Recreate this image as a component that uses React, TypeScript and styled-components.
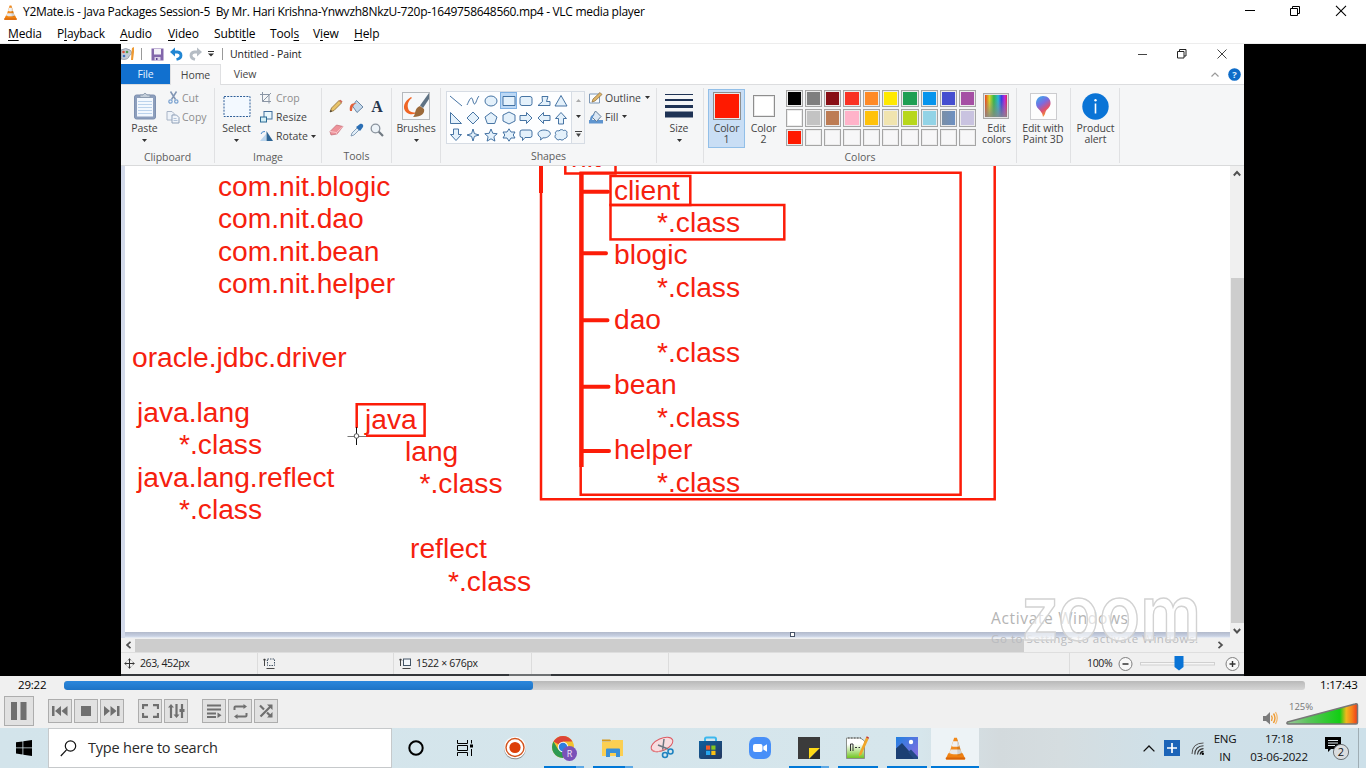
import React from "react";
import styled, { createGlobalStyle } from "styled-components";

const UI = `"Open Sans", "Noto Sans", sans-serif`;
const RED = "#fc1c08";

const Global = createGlobalStyle`
  *, *::before, *::after { box-sizing: border-box; }
  html, body { margin: 0; padding: 0; }
  body { width: 1366px; height: 768px; overflow: hidden; background: #fff; font-family: ${UI}; }
  svg { display: block; flex: none; }
`;

const Screen = styled.div`
  width: 1366px;
  height: 768px;
  display: flex;
  flex-direction: column;
  overflow: hidden;
`;

/* ---------- shared ---------- */
const Label = styled.span<{ $size?: number; $ls?: number; $color?: string; $ml?: number; $w?: number }>`
  font-size: ${(p) => p.$size ?? 12}px;
  letter-spacing: ${(p) => p.$ls ?? 0}px;
  color: ${(p) => p.$color ?? "#000"};
  margin-left: ${(p) => p.$ml ?? 0}px;
  ${(p) => (p.$w ? `width: ${p.$w}px;` : "")}
  white-space: pre;
  line-height: 1;
  flex: none;
`;

const Spacer = styled.div`
  flex: 1;
`;

type GlyphProps = { w: number; h: number; vb?: string; ml?: number; children: React.ReactNode };
const GlyphSvg = styled.svg<{ $ml: number }>`
  margin-left: ${(p) => p.$ml}px;
`;
const Glyph = ({ w, h, vb, ml = 0, children }: GlyphProps) => (
  <GlyphSvg $ml={ml} width={w} height={h} viewBox={vb ?? `0 0 ${w} ${h}`} fill="none">
    {children}
  </GlyphSvg>
);

const Cone = ({ size, ml = 0 }: { size: number; ml?: number }) => (
  <Glyph w={size} h={size} vb="0 0 24 24" ml={ml}>
    <path d="M4.5 17h15l2.5 5.4c.2.6-.1 1.1-.8 1.1H2.800c-.7 0-1-.5-.8-1.100z" fill="#f08010" />
    <path d="M2 21.500h20l.2 1.200c0 .5-.4.8-1 .8H2.800c-.6 0-1-.3-1-.8z" fill="#d86408" />
    <path d="M10.600.8h2.800L18.800 18c-1.500 2-12.100 2-13.600 0z" fill="#f28a1c" />
    <path d="M9.500 4.500h5l1.500 4.800c-1.500 1.200-6.500 1.200-8 0z" fill="#f1f1f1" />
    <path d="M6.800 13h10.400l1.100 3.600c-2 1.800-10.600 1.800-12.600 0z" fill="#e9e9e9" />
    <path d="M13.400.8 18.800 18c-.8 1-3 1.400-4.800 1.500z" fill="#000" opacity=".1" />
  </Glyph>
);

const WindowButtons = ({ dark }: { dark: string }) => (
  <>
    <path d="M0 5.500h10" stroke={dark} />
    <path d="M45.500 3.500h7v7h-7zM47.500 3.500v-2h7v7h-2" stroke={dark} />
    <path d="M91 .8l10 10M101 .8l-10 10" stroke={dark} strokeWidth="1.100" />
  </>
);

/* ---------- VLC chrome ---------- */
const TitleBar = styled.header`
  height: 24px;
  flex: none;
  display: flex;
  align-items: center;
  background: #fff;
  padding-left: 3px;
`;

const MenuBar = styled.nav`
  height: 20px;
  flex: none;
  background: #fff;
  display: flex;
  align-items: center;
  padding-left: 8px;
  border-bottom: 1px solid #ededed;
`;

const MenuItem = styled.span<{ $w: number }>`
  width: ${(p) => p.$w}px;
  font-size: 12px;
  letter-spacing: -0.15px;
  line-height: 18px;
  white-space: nowrap;
  u { text-underline-offset: 2px; text-decoration-thickness: 1px; }
`;

const Video = styled.main`
  height: 632px;
  flex: none;
  background: #000;
  display: flex;
  justify-content: flex-start;
  padding: 0 0 0 121px;
`;

/* ---------- Paint window ---------- */
const PaintWindow = styled.section`
  position: relative;
  width: 1123px;
  height: 632px;
  display: flex;
  flex-direction: column;
  background: #fff;
`;

const PaintTitle = styled.div`
  height: 20px;
  display: flex;
  align-items: center;
  padding-right: 17px;
`;

const Tabs = styled.div`
  height: 21px;
  display: flex;
  border-bottom: 1px solid #dcdddf;
  align-items: flex-start;
`;

const Tab = styled.div<{ $w: number; $kind?: "file" | "active" }>`
  width: ${(p) => p.$w}px;
  height: ${(p) => (p.$kind === "active" ? 21 : 20)}px;
  display: flex;
  align-items: center;
  justify-content: center;
  font-size: 10.500px;
  letter-spacing: -0.1px;
  color: ${(p) => (p.$kind === "file" ? "#e6f2ff" : "#454545")};
  background: ${(p) => (p.$kind === "file" ? "#1170cf" : p.$kind === "active" ? "#f6f6f7" : "transparent")};
  border: ${(p) => (p.$kind === "active" ? "1px solid #dfe0e2" : "0")};
  border-bottom: 0;
`;

const TabTools = styled.div`
  margin-left: auto;
  height: 20px;
  display: flex;
  align-items: center;
  padding-right: 3px;
`;

const Ribbon = styled.div`
  height: 81px;
  background: #f5f6f7;
  border-bottom: 1px solid #d9dadb;
  display: flex;
  padding-top: 3px;
`;

const Group = styled.div<{ $w: number }>`
  width: ${(p) => p.$w}px;
  height: 75px;
  border-right: 1px solid #e0e1e3;
  display: flex;
  flex-direction: column;
`;

const GroupBody = styled.div<{ $pl?: number }>`
  height: 60px;
  display: flex;
  padding-left: ${(p) => p.$pl ?? 0}px;
`;

const GroupName = styled.div<{ $shift?: number }>`
  text-align: center;
  font-size: 10.500px;
  line-height: 14px;
  letter-spacing: -0.05px;
  color: #5c5c5c;
  margin-top: 2px;
  padding-left: ${(p) => p.$shift ?? 0}px;
`;

const BigButton = styled.div<{ $w: number; $on?: boolean }>`
  width: ${(p) => p.$w}px;
  height: 59px;
  margin-top: 1px;
  flex: none;
  display: flex;
  flex-direction: column;
  align-items: center;
  font-size: 10.500px;
  line-height: 11px;
  letter-spacing: -0.1px;
  color: #444;
  text-align: center;
  white-space: pre;
  background: ${(p) => (p.$on ? "#c9def5" : "transparent")};
  box-shadow: ${(p) => (p.$on ? "inset 0 0 0 1px #92bfe8" : "none")};
`;

const BigArt = styled.div`
  height: 34px;
  display: flex;
  align-items: center;
  justify-content: center;
`;

const SmallColumn = styled.div<{ $ml?: number }>`
  display: flex;
  flex-direction: column;
  margin-left: ${(p) => p.$ml ?? 0}px;
`;

const SmallRow = styled.div<{ $dim?: boolean }>`
  height: 19.300px;
  display: flex;
  align-items: center;
  font-size: 10.500px;
  letter-spacing: 0;
  color: ${(p) => (p.$dim ? "#8d8d8d" : "#444")};
  white-space: nowrap;
`;

const SmallArt = styled.div`
  width: 16px;
  display: flex;
  justify-content: flex-start;
`;

const ToolGrid = styled.div`
  display: grid;
  grid-template-columns: repeat(3, 20.500px);
  grid-template-rows: 24px 24px;
  margin-top: 6px;
  place-items: center;
`;

const ShapeBox = styled.div`
  display: grid;
  grid-template-columns: repeat(7, 17.600px);
  grid-template-rows: repeat(3, 17.300px);
  place-items: center;
  width: 126px;
  height: 53px;
  margin-top: 3px;
  background: #fdfeff;
  border: 1px solid #d6dce4;
`;

const ShapeCell = styled.div<{ $on?: boolean }>`
  width: 17px;
  height: 17px;
  display: flex;
  align-items: center;
  justify-content: center;
  background: ${(p) => (p.$on ? "#bcd8f5" : "transparent")};
  box-shadow: ${(p) => (p.$on ? "inset 0 0 0 1px #7fb0e2" : "none")};
`;

const ShapeScroll = styled.div`
  width: 13px;
  height: 53px;
  margin-top: 3px;
  border: 1px solid #d6dce4;
  border-left: 0;
  display: flex;
  flex-direction: column;
  justify-content: space-around;
  align-items: center;
`;

const Swatch = styled.div<{ $size: number; $color: string }>`
  width: ${(p) => p.$size}px;
  height: ${(p) => p.$size}px;
  background: ${(p) => p.$color};
  border: 1px solid #8e8e8e;
  box-shadow: inset 0 0 0 1px #e8e8e8;
`;

const Palette = styled.div`
  display: grid;
  grid-template-columns: repeat(10, 17.300px);
  grid-template-rows: repeat(3, 17.300px);
  gap: 2px;
  margin: 2px 0 0 3.500px;
`;

const Chip = styled.div<{ $color: string }>`
  background: ${(p) => p.$color};
  border: 1px solid #a5a5a5;
  box-shadow: inset 0 0 0 1px #ececec;
`;

const Workspace = styled.div`
  height: 472px;
  display: flex;
  background: #cfd7e8;
`;

const CanvasArea = styled.div`
  width: 1109px;
  display: flex;
  flex-direction: column;
  padding-left: 4px;
  background: #d3daea;
`;

const Canvas = styled.div`
  position: relative;
  height: 466px;
  background: #fff;
  overflow: hidden;
`;

const CanvasEdge = styled.div`
  height: 6px;
  background: linear-gradient(#b2bacb, #c8d1e3 70%, #eef2f8);
  display: flex;
  padding-left: 665px;
`;

const Handle = styled.div`
  width: 5px;
  height: 5px;
  background: #fff;
  border: 1px solid #4a5568;
`;

const Note = styled.div<{ $x: number; $y: number }>`
  position: absolute;
  left: ${(p) => p.$x - 125}px;
  top: ${(p) => p.$y - 166}px;
  font-family: "Liberation Sans", Arial, sans-serif;
  font-size: 28.200px;
  line-height: 32.450px;
  color: #f6200e;
  white-space: pre;
`;

const NoteLine = styled.div<{ $in?: number }>`
  padding-left: ${(p) => p.$in ?? 0}px;
`;

const VScroll = styled.div`
  width: 14px;
  background: #f0f0f0;
  display: flex;
  flex-direction: column;
  align-items: center;
`;

const VThumb = styled.div`
  width: 13px;
  height: 345px;
  margin-top: 98px;
  background: #cdcdcd;
`;

const HScroll = styled.div`
  height: 15px;
  background: #f0f0f0;
  display: flex;
  align-items: center;
  border-bottom: 1px solid #dedede;
`;

const HThumb = styled.div`
  width: 889px;
  height: 13px;
  margin-left: 4px;
  background: #cdcdcd;
`;

const StatusBar = styled.div`
  height: 21px;
  background: #f0f0f0;
  display: flex;
`;

const StatusCell = styled.div<{ $w?: number; $pl?: number; $line?: boolean }>`
  ${(p) => (p.$w ? `width: ${p.$w}px;` : "flex: 1;")}
  height: 21px;
  padding-left: ${(p) => p.$pl ?? 0}px;
  border-right: ${(p) => (p.$line ? "1px solid #dcdcdc" : "0")};
  display: flex;
  align-items: center;
`;

const BottomEdge = styled.div`
  height: 2px;
  background: linear-gradient(90deg, #33363a 388px, #6d7072 388px 430px, #33363a 430px);
`;

const Watermark = styled.svg`
  position: absolute;
  left: 864px;
  top: 546px;
`;

/* ---------- player controls ---------- */
const SeekRow = styled.div`
  height: 18px;
  flex: none;
  background: #f0f0f0;
  display: flex;
  align-items: center;
  padding-left: 18px;
`;

const SeekTrack = styled.div`
  width: 1241px;
  height: 9px;
  border-radius: 3px;
  background: linear-gradient(#b9b9b9, #d6d6d6);
  overflow: hidden;
`;

const SeekFill = styled.div`
  width: 469px;
  height: 9px;
  border-radius: 3px;
  background: linear-gradient(#2b87dc, #1e74c6);
`;

const ControlRow = styled.div`
  height: 34px;
  flex: none;
  background: #f0f0f0;
  display: flex;
  align-items: center;
  padding-left: 4px;
`;

const PlayerButton = styled.div<{ $size?: number; $ml?: number }>`
  width: ${(p) => p.$size ?? 24}px;
  height: ${(p) => p.$size ?? 24}px;
  margin-left: ${(p) => p.$ml ?? 0}px;
  border: 1px solid #adadad;
  background: #e1e1e1;
  display: flex;
  align-items: center;
  justify-content: center;
`;

const Volume = styled.div`
  margin-left: auto;
  height: 34px;
  display: flex;
  align-items: flex-start;
  padding: 8px 6px 0 0;
`;

const VolumeMeter = styled.div`
  position: relative;
  width: 75px;
  height: 24px;
  margin-left: 7px;
`;

const VolumeText = styled.span`
  position: absolute;
  left: 4px;
  top: 0;
  font-size: 9.500px;
  line-height: 10px;
  color: #777;
`;

/* ---------- taskbar ---------- */
const Taskbar = styled.footer`
  height: 40px;
  flex: none;
  display: flex;
  background: linear-gradient(90deg, #d3e4eb 0, #d6e6ec 920px, #d3dadd 1000px, #d5dde0 1060px, #cfe0e8 1160px, #cde0e9 100%);
`;

const StartButton = styled.div`
  width: 48px;
  display: flex;
  align-items: center;
  justify-content: center;
`;

const SearchBox = styled.div`
  width: 344px;
  height: 40px;
  background: #fff;
  border: 1px solid #c6c9cb;
  display: flex;
  align-items: center;
  padding-left: 11px;
`;

const TaskItem = styled.div<{ $w?: number; $bar?: "full" | "split"; $on?: boolean }>`
  width: ${(p) => p.$w ?? 49}px;
  height: 40px;
  flex: none;
  display: flex;
  flex-direction: column;
  align-items: center;
  justify-content: center;
  background: ${(p) => (p.$on ? "#edf3f6" : "transparent")};
  position: relative;
  &::after {
    content: "";
    position: absolute;
    bottom: 0;
    height: 2px;
    width: ${(p) => (p.$on ? 48 : 40)}px;
    background: ${(p) =>
      p.$bar === "split" ? "linear-gradient(90deg, #0078d7 32px, #5ba8e5 32px)" : p.$bar ? "#0078d7" : "transparent"};
  }
`;

const Tray = styled.div`
  margin-left: auto;
  display: flex;
  align-items: center;
`;

const TrayText = styled.div<{ $w: number }>`
  width: ${(p) => p.$w}px;
  text-align: center;
  font-size: 11.500px;
  line-height: 18px;
  letter-spacing: -0.25px;
  color: #111;
  white-space: nowrap;
`;

const ShowDesktop = styled.div`
  width: 8px;
  height: 40px;
  border-left: 1px solid #9fadb4;
`;

/* ---------- data ---------- */
const menus: [string, string, string, number][] = [
  ["", "M", "edia", 49],
  ["P", "l", "ayback", 63],
  ["", "A", "udio", 48],
  ["", "V", "ideo", 46],
  ["Subti", "t", "le", 56],
  ["Tool", "s", "", 43],
  ["V", "i", "ew", 41],
  ["", "H", "elp", 40],
];

const chips = [
  "#000", "#7f7f7f", "#880f15", "#fa3223", "#ff8a26", "#ffe900", "#1f9f53", "#0795ed", "#444ed0", "#a54fa4",
  "#fff", "#c3c3c3", "#bd7c54", "#ffb3c9", "#ffc20b", "#f0e4af", "#b7d71c", "#92d3e6", "linear-gradient(90deg,#7c8fa4,#6b90c4)", "#c9c3e0",
  "#ff1a00", ...Array(9).fill("#f7f7f8"),
];

const shapes = [
  "M1 2l12 10", "M1 11C3 7 4 4 5.500 4S7 10 8.500 10 11 4 13 2", "M1 7a6 5 0 1 0 12 0a6 5 0 1 0-12 0", "M1 2.500h12v9H1z",
  "M3 2.500h8a2 2 0 0 1 2 2v5a2 2 0 0 1-2 2H3a2 2 0 0 1-2-2v-5a2 2 0 0 1 2-2z", "M5 2.500h6l-1.500 5H13v4H1L5.500 7.500z", "M7 1.500l6 10.500H1z",
  "M1.500 1.500v11h11z", "M7 1l6 6-6 6-6-6z", "M7 1.500l6 4.500-2.300 6.500H3.300L1 6z", "M7 1l6 3v6l-6 3-6-3V4z", "M1 4.500h6.500V1.500L13 7l-5.500 5.500v-3H1z",
  "M13 4.500H6.500V1.500L1 7l5.500 5.500v-3H13z", "M4.500 13V7.500H1.500L7 1.500l5.500 6h-3V13z",
  "M4.500 1v5.500H1.500L7 12.500l5.500-6h-3V1z", "M7 1l1.400 4.600L13 7 8.400 8.400 7 13 5.600 8.400 1 7l4.600-1.400z", "M7 1l1.800 4.300 4.400.4-3.300 3 1 4.400L7 10.800 3.100 13.100l1-4.400-3.300-3 4.400-.4z",
  "M7 .8l2 3.200h4L11.200 7 13 10H9l-2 3.200L5 10H1l1.800-3L1 4h4z", "M3 2h8q2 0 2 2v3.500q0 2-2 2H6L3.500 12.500V9.500H3q-2 0-2-2V4q0-2 2-2z",
  "M4 9.800C-2 6 2 2 7 2s9.500 3.500 3.500 7c-1.500.8-3 1-4.500.8L3.500 12z", "M3 11c-3-1-2-4-1-4.500C0 4 3 2 5 3c1-2 4-1.500 4.500-.5C12 1.500 14 4 12.500 6c1.500 2 0 4.500-2 4.500-1 2-4 2-4.500.5C5 12.500 3 12 3 11z",
];

const Caret = ({ ml = 0, color = "#333" }: { ml?: number; color?: string }) => (
  <Glyph w={5} h={3} ml={ml}>
    <path d="M0 0h5L2.500 3z" fill={color} />
  </Glyph>
);

const CaretSlot = styled.div`
  height: 8px;
  display: flex;
  align-items: flex-end;
`;

const Big = ({ w, text, art, caret, on }: { w: number; text: string; art: React.ReactNode; caret?: boolean; on?: boolean }) => (
  <BigButton $w={w} $on={on}>
    <BigArt>{art}</BigArt>
    {text}
    {caret && (
      <CaretSlot>
        <Caret />
      </CaretSlot>
    )}
  </BigButton>
);

const PaintRibbon = () => (
  <Ribbon>
    <Group $w={94}>
      <GroupBody $pl={3}>
        <Big
          w={41}
          text="Paste"
          caret
          art={
            <Glyph w={24} h={28}>
              <rect x="1.500" y="3" width="21" height="24" rx="2" fill="#8d9fbd" stroke="#7e90b0" />
              <rect x="4" y="6" width="16" height="18.500" fill="#f3f8fe" />
              <path d="M5 9.500h14M5 12.500h14M5 15.500h14M5 18.500h14M5 21.500h14" stroke="#bcd3ec" />
              <path d="M7 5.500V3h3q2-3.500 4 0h3v2.500z" fill="#c4ced9" stroke="#8795a8" strokeWidth=".8" />
            </Glyph>
          }
        />
        <SmallColumn $ml={1}>
          <SmallRow $dim>
            <SmallArt>
              <Glyph w={12} h={13} ml={2}>
                <path d="M2.500.5l5 8M8.500.5l-5 8" stroke="#8296b4" strokeWidth="1.500" />
                <circle cx="2.500" cy="10.500" r="1.700" stroke="#7aa2d0" strokeWidth="1.200" />
                <circle cx="8.300" cy="10.500" r="1.700" stroke="#7aa2d0" strokeWidth="1.200" />
              </Glyph>
            </SmallArt>
            Cut
          </SmallRow>
          <SmallRow $dim>
            <SmallArt>
              <Glyph w={14} h={14}>
                <path d="M1 1.500h5l2 2v6.500H1z" fill="#eef3f9" stroke="#a8b4c6" />
                <path d="M6 5h4.500L13 7.500V13H6z" fill="#f1f5fa" stroke="#8fa0b8" />
                <path d="M7.500 8.500h3M7.500 10.500h4" stroke="#b3c3d8" />
              </Glyph>
            </SmallArt>
            Copy
          </SmallRow>
        </SmallColumn>
      </GroupBody>
      <GroupName>Clipboard</GroupName>
    </Group>

    <Group $w={107}>
      <GroupBody $pl={0}>
        <Big
          w={43}
          text="Select"
          caret
          art={
            <Glyph w={28} h={23}>
              <rect x="1" y="1.500" width="26" height="20" fill="#f3f9ff" stroke="#2f5f99" strokeDasharray="2 1.200" />
            </Glyph>
          }
        />
        <SmallColumn $ml={2}>
          <SmallRow $dim>
            <SmallArt>
              <Glyph w={12} h={12}>
                <path d="M2.500 0v9.500H11M0 2.500h9v9M2.500 9.500L11 1" stroke="#8b96a5" />
              </Glyph>
            </SmallArt>
            Crop
          </SmallRow>
          <SmallRow>
            <SmallArt>
              <Glyph w={13} h={12}>
                <rect x="4" y=".5" width="8" height="7.500" fill="#e9f6fb" stroke="#43709e" />
                <rect x=".5" y="6" width="6" height="5" fill="#d4eff5" stroke="#2c6b95" />
              </Glyph>
            </SmallArt>
            Resize
          </SmallRow>
          <SmallRow>
            <SmallArt>
              <Glyph w={13} h={12}>
                <path d="M0 11h6V4z" fill="#b9d5ee" />
                <path d="M6.500 1L13 11H6.500z" fill="#2e6594" />
                <path d="M1 4q1-3 4-2.500" stroke="#4a8ccc" />
              </Glyph>
            </SmallArt>
            Rotate
            <Caret ml={3} />
          </SmallRow>
        </SmallColumn>
      </GroupBody>
      <GroupName>Image</GroupName>
    </Group>

    <Group $w={70}>
      <GroupBody $pl={4}>
        <ToolGrid>
          <Glyph w={14} h={14}>
            <path d="M1 13l1.500-4L10 1.500 12.500 4 5 11.500z" fill="#e8c36a" stroke="#8a6a35" strokeWidth=".8" />
            <path d="M10 1.500L12.500 4 13.500 2.500 11.500.8z" fill="#cf6a5a" />
            <path d="M1 13l.8-2.200 1.400 1.400z" fill="#333" />
          </Glyph>
          <Glyph w={15} h={14}>
            <path d="M7.500 1.500L14 8l-6 5.500L3.500 7z" fill="#c5d9eb" stroke="#6a86a5" />
            <path d="M1 12C0 7 2 3 8 4.500 4 5 3.500 8 3 12z" fill="#e2603a" />
          </Glyph>
          <Glyph w={14} h={14}>
            <text x="7" y="12.500" textAnchor="middle" fontFamily="Liberation Serif, serif" fontWeight="700" fontSize="16" fill="#27364e">
              A
            </text>
          </Glyph>
          <Glyph w={15} h={12}>
            <path d="M1 7.500L7.500 1l6.500 1.500L8 10l-6 1z" fill="#ee929a" stroke="#c06a74" strokeWidth=".7" />
            <path d="M1 7.500l6.500 1L14 2.500M7.500 8.500L8 10.500" stroke="#f9c8cc" />
          </Glyph>
          <Glyph w={14} h={14}>
            <path d="M1 13l1-3 5-5 2 2-5 5z" fill="#e2eef8" stroke="#6e8ba9" strokeWidth=".8" />
            <path d="M6 4l4 4 1.200-1.500L13 4c1-2-1-4-3-3L7.500 3z" fill="#2b6fb5" />
          </Glyph>
          <Glyph w={14} h={14}>
            <circle cx="5.500" cy="5.500" r="4.300" fill="#edf3f8" stroke="#8a939d" strokeWidth="1.300" />
            <path d="M8.800 8.800L13 13" stroke="#707982" strokeWidth="2.200" />
          </Glyph>
        </ToolGrid>
      </GroupBody>
      <GroupName>Tools</GroupName>
    </Group>

    <Group $w={49}>
      <GroupBody>
        <Big
          w={48}
          text="Brushes"
          caret
          art={
            <Glyph w={28} h={28}>
              <rect x=".5" y=".5" width="27" height="27" fill="#f6f8fa" stroke="#b5b9bd" />
              <path d="M9 5C2 9 0 16 4 20c4 4 10 2 13 0-4 1-10 1-11-4-1-4 1-8 4-10z" fill="#ef6626" />
              <path d="M27 1v6L21 16l-3-2.500z" fill="#5e7284" />
              <path d="M18 14l4 3c1 4-2 8-11 8 3-2 1-9 7-11z" fill="#9b6a3b" />
            </Glyph>
          }
        />
      </GroupBody>
    </Group>

    <Group $w={216}>
      <GroupBody $pl={5}>
        <ShapeBox>
          {shapes.map((d, i) => (
            <ShapeCell key={i} $on={i === 3}>
              <Glyph w={14} h={14}>
                <path d={d} stroke="#33659a" strokeWidth=".9" fill={i < 2 ? "none" : "#e4f1fb"} />
              </Glyph>
            </ShapeCell>
          ))}
        </ShapeBox>
        <ShapeScroll>
          <Glyph w={5} h={3}>
            <path d="M0 3h5L2.500 0z" fill="#aaa" />
          </Glyph>
          <Caret />
          <Glyph w={7} h={6}>
            <path d="M0 .5h7" stroke="#444" />
            <path d="M1 2.500h5L3.500 6z" fill="#444" />
          </Glyph>
        </ShapeScroll>
        <SmallColumn $ml={4}>
          <SmallRow>
            <SmallArt>
              <Glyph w={14} h={12}>
                <path d="M.5 2h10v9H.5z" fill="#fafcff" stroke="#7d97b5" />
                <path d="M3 10l1-3L11 .5 13 2.500 6 9z" fill="#dfb56a" stroke="#8a6a35" strokeWidth=".7" />
              </Glyph>
            </SmallArt>
            Outline
            <Caret ml={4} />
          </SmallRow>
          <SmallRow>
            <SmallArt>
              <Glyph w={15} h={14}>
                <path d="M0 10h14v3.500H0z" fill="#5f95cf" />
                <path d="M6.500 1L12 6.500l-4.500 5L3 7z" fill="#dbe7f3" stroke="#5f7c9b" />
                <path d="M1 11C1 7 2 4.500 6 4.500 3.500 6 3.500 8 3 11z" fill="#5f95cf" />
              </Glyph>
            </SmallArt>
            Fill
            <Caret ml={4} />
          </SmallRow>
        </SmallColumn>
      </GroupBody>
      <GroupName $shift={0}>Shapes</GroupName>
    </Group>

    <Group $w={47}>
      <GroupBody>
        <Big
          w={44}
          text="Size"
          caret
          art={
            <Glyph w={28} h={28}>
              <path d="M0 2.500h28" stroke="#1f3355" />
              <path d="M0 8h28" stroke="#1f3355" strokeWidth="2" />
              <path d="M0 14.500h28" stroke="#1f3355" strokeWidth="3" />
              <path d="M0 22.500h28" stroke="#1f3355" strokeWidth="6" />
            </Glyph>
          }
        />
      </GroupBody>
    </Group>

    <Group $w={313}>
      <GroupBody $pl={4}>
        <Big w={37} on text={"Color\n1"} art={<Swatch $size={28} $color="#ff1a00" />} />
        <Big w={37} text={"Color\n2"} art={<Swatch $size={22} $color="#fff" />} />
        <Palette>
          {chips.map((c, i) => (
            <Chip key={i} $color={c} />
          ))}
        </Palette>
        <Big
          w={40}
          text={"Edit\ncolors"}
          art={
            <Glyph w={26} h={26}>
              <defs>
                <linearGradient id="hue">
                  <stop offset="0" stopColor="#e8421e" />
                  <stop offset=".2" stopColor="#d7d52a" />
                  <stop offset=".4" stopColor="#35b64a" />
                  <stop offset=".6" stopColor="#29b4d8" />
                  <stop offset=".75" stopColor="#3a3fe0" />
                  <stop offset=".9" stopColor="#c028d8" />
                  <stop offset="1" stopColor="#e0254f" />
                </linearGradient>
                <linearGradient id="grey" x2="0" y2="1">
                  <stop offset=".2" stopColor="#888" stopOpacity="0" />
                  <stop offset="1" stopColor="#888" stopOpacity=".85" />
                </linearGradient>
              </defs>
              <rect x=".5" y=".5" width="25" height="25" fill="#e4e4e4" stroke="#a9a9a9" />
              <rect x="2" y="2" width="22" height="22" fill="url(#hue)" />
              <rect x="2" y="2" width="22" height="22" fill="url(#grey)" />
            </Glyph>
          }
        />
      </GroupBody>
      <GroupName>Colors</GroupName>
    </Group>

    <Group $w={54}>
      <Big
        w={52}
        text={"Edit with\nPaint 3D"}
        art={
          <Glyph w={27} h={27}>
            <defs>
              <linearGradient id="drop" x1="0" y1="0" x2=".5" y2="1">
                <stop offset="0" stopColor="#30b5ee" />
                <stop offset=".45" stopColor="#7a6be0" />
                <stop offset=".75" stopColor="#e0506e" />
                <stop offset="1" stopColor="#f39a2e" />
              </linearGradient>
            </defs>
            <rect x=".5" y=".5" width="26" height="26" fill="#fdfdfd" stroke="#cccccf" />
            <path d="M13 3c5 0 8 3.500 7.500 8-.5 4-4 5-5 8-.5 2-1 3.500-2.500 5-.5-3-1-4-3-6.500C8 15.500 6 14 6 10.500 6 6 9 3 13 3z" fill="url(#drop)" />
          </Glyph>
        }
      />
    </Group>

    <Group $w={49}>
      <Big
        w={49}
        text={"Product\nalert"}
        art={
          <Glyph w={27} h={27}>
            <circle cx="13.500" cy="13.500" r="13.200" fill="#0a74d6" />
            <path d="M13.500 10.500v10" stroke="#fff" strokeWidth="1.600" />
            <circle cx="13.500" cy="7.200" r="1.200" fill="#fff" />
          </Glyph>
        }
      />
    </Group>
  </Ribbon>
);

const Drawing = () => (
  <Canvas>
    <svg width="1105" height="466" viewBox="125 166 1105 466" fill="none" stroke={RED} strokeWidth="2.500">
      <path d="M541 160V499.200H994.700V160" />
      <path d="M541 160V193" strokeWidth="4" />
      <path d="M565.300 160V173.500H615.500V160" />
      <path d="M580.700 172.700H960.600V494.700H580.700z" />
      <path d="M581.500 172V467" strokeWidth="4.300" />
      <rect x="610.500" y="176" width="79.800" height="29" />
      <rect x="610.500" y="205" width="173.800" height="34.400" />
      <g strokeWidth="4" strokeLinecap="round">
        <path d="M583 191.800H608M583 253.300H606M583 320.200H607.500M583 386.800H608.500M583 450.900H609" />
      </g>
      <path d="M356.700 428V404.200H424.600V435.800H366" />
      <path d="M347.500 436.500H366" stroke="#777" strokeWidth="1" />
      <path d="M356.500 427V445" stroke="#111" strokeWidth="1" />
      <circle cx="356.500" cy="436" r="2.300" fill="#fff" stroke="#555" strokeWidth="1" />
    </svg>
    <Note $x={218} $y={170}>
      <NoteLine>com.nit.blogic</NoteLine>
      <NoteLine>com.nit.dao</NoteLine>
      <NoteLine>com.nit.bean</NoteLine>
      <NoteLine>com.nit.helper</NoteLine>
    </Note>
    <Note $x={132} $y={341}>oracle.jdbc.driver</Note>
    <Note $x={137} $y={396}>
      <NoteLine>java.lang</NoteLine>
      <NoteLine $in={42}>*.class</NoteLine>
      <NoteLine>java.lang.reflect</NoteLine>
      <NoteLine $in={42}>*.class</NoteLine>
    </Note>
    <Note $x={365} $y={402.500}>
      <NoteLine>java</NoteLine>
      <NoteLine $in={40}>lang</NoteLine>
      <NoteLine $in={54.500}>*.class</NoteLine>
      <NoteLine> </NoteLine>
      <NoteLine $in={45}>reflect</NoteLine>
      <NoteLine $in={83}>*.class</NoteLine>
    </Note>
    <Note $x={571} $y={141}>nit</Note>
    <Note $x={614} $y={173.500}>
      <NoteLine>client</NoteLine>
      <NoteLine $in={43}>*.class</NoteLine>
      <NoteLine>blogic</NoteLine>
      <NoteLine $in={43}>*.class</NoteLine>
      <NoteLine>dao</NoteLine>
      <NoteLine $in={43}>*.class</NoteLine>
      <NoteLine>bean</NoteLine>
      <NoteLine $in={43}>*.class</NoteLine>
      <NoteLine>helper</NoteLine>
      <NoteLine $in={43}>*.class</NoteLine>
    </Note>
  </Canvas>
);

const Paint = () => (
  <PaintWindow>
    <PaintTitle>
      <Glyph w={14} h={14}>
        <path d="M0 3q5-3 9 0c3 3 1 5-1 6 0 3-4 4-8 3z" fill="#c3cbd6" stroke="#8791a0" strokeWidth=".8" />
        <circle cx="2.500" cy="5" r="1.300" fill="#d9523c" />
        <circle cx="6" cy="5" r="1.300" fill="#4c9a4f" />
        <circle cx="3" cy="9" r="1.300" fill="#3f74c4" />
        <path d="M11 1l2-1v5l-1 8h-2l.5-8z" fill="#ee9a33" />
      </Glyph>
      <Glyph w={1} h={12} ml={6}>
        <path d="M.5 0v12" stroke="#999" />
      </Glyph>
      <Glyph w={13} h={13} ml={9}>
        <path d="M.5.500h12v12H.5z" fill="#8266ab" />
        <path d="M3 1h7v5.500H3z" fill="#f3f0f8" />
        <path d="M3.500 9h6v3.500h-6z" fill="#d9cfe8" />
        <path d="M5 10h1.500v2H5z" fill="#5c4290" />
      </Glyph>
      <Glyph w={13} h={14} ml={6}>
        <path d="M3 5h4.500q3.500.5 3.500 3.500T6.500 12.500" stroke="#2186d3" strokeWidth="2.800" />
        <path d="M0 5L5 .5v9z" fill="#2186d3" />
      </Glyph>
      <Glyph w={13} h={14} ml={6}>
        <path d="M10 5H5.500Q2 5.500 2 8.500t4 4" stroke="#b5bcc4" strokeWidth="2.800" />
        <path d="M13 5L8 .5v9z" fill="#b5bcc4" />
      </Glyph>
      <Glyph w={6} h={6} ml={6}>
        <path d="M0 .5h6" stroke="#333" />
        <path d="M0 2.500h6L3 5.500z" fill="#333" />
      </Glyph>
      <Glyph w={1} h={12} ml={8}>
        <path d="M.5 0v12" stroke="#999" />
      </Glyph>
      <Label $size={10.5} $ls={-0.1} $ml={7} $color="#222">
        Untitled - Paint
      </Label>
      <Spacer />
      <Glyph w={89} h={12}>
        <path d="M0 6.500h9" stroke="#444" />
        <path d="M39.500 3.500h6.500v6.500h-6.500zM41.500 3.500v-2h6.500v6.500h-2" stroke="#222" />
        <path d="M79.500 1.500l9 9M88.500 1.500l-9 9" stroke="#444" />
      </Glyph>
    </PaintTitle>
    <Tabs>
      <Tab $w={49} $kind="file">File</Tab>
      <Tab $w={51} $kind="active">Home</Tab>
      <Tab $w={48}>View</Tab>
      <TabTools>
        <Glyph w={8} h={5}>
          <path d="M.5 4.500l3.500-3.500 3.500 3.500" stroke="#9a9a9a" strokeWidth="1.200" />
        </Glyph>
        <Glyph w={13} h={13} ml={9}>
          <circle cx="6.500" cy="6.500" r="6.300" fill="#0f6cc8" />
          <text x="6.500" y="10" textAnchor="middle" fontFamily={UI} fontWeight="700" fontSize="9.500" fill="#dcecfb">
            ?
          </text>
        </Glyph>
      </TabTools>
    </Tabs>
    <PaintRibbon />
    <Workspace>
      <CanvasArea>
        <Drawing />
        <CanvasEdge>
          <Handle />
        </CanvasEdge>
      </CanvasArea>
      <VScroll>
        <Glyph w={8} h={14}>
          <path d="M.8 9.500L4 6l3.200 3.500" stroke="#505050" strokeWidth="1.900" />
        </Glyph>
        <VThumb />
        <Glyph w={8} h={14}>
          <path d="M.8 6L4 9.500 7.200 6" stroke="#505050" strokeWidth="1.900" />
        </Glyph>
      </VScroll>
    </Workspace>
    <HScroll>
      <Glyph w={5} h={8} ml={5}>
        <path d="M4.500.8L1 4l3.500 3.200" stroke="#505050" strokeWidth="1.700" />
      </Glyph>
      <HThumb />
      <Spacer />
      <Glyph w={27} h={8}>
        <path d="M1.500.8L5 4 1.500 7.200" stroke="#505050" strokeWidth="1.700" />
      </Glyph>
    </HScroll>
    <StatusBar>
      <StatusCell $w={137} $pl={3} $line>
        <Glyph w={11} h={11}>
          <path d="M5.500 1v9M1 5.500h9" stroke="#333" />
          <path d="M4 2.500L5.500.5 7 2.500M4 8.500l1.500 2 1.500-2M2.500 4L.5 5.500l2 1.500M8.500 4l2 1.500-2 1.500" stroke="#444" strokeWidth=".8" />
        </Glyph>
        <Label $size={10.5} $ls={-0.4} $ml={5} $color="#222">263, 452px</Label>
      </StatusCell>
      <StatusCell $w={136} $pl={5} $line>
        <Glyph w={13} h={11}>
          <path d="M1.500 1v7M0 2.500L1.500.8 3 2.500M3.500 10.500h8" stroke="#333" strokeWidth=".9" />
          <rect x="4.500" y="1" width="7" height="6.500" stroke="#456" strokeDasharray="1.500 1" />
        </Glyph>
      </StatusCell>
      <StatusCell $w={138} $pl={5} $line>
        <Glyph w={13} h={11}>
          <path d="M1.500 1v7M0 2.500L1.500.8 3 2.500M3.500 10.500h8" stroke="#333" strokeWidth=".9" />
          <rect x="4.500" y="1" width="7" height="6.500" fill="#f4f8fc" stroke="#456" />
        </Glyph>
        <Label $size={10.5} $ls={-0.3} $ml={4} $color="#222">1522 × 676px</Label>
      </StatusCell>
      <StatusCell $w={137} $line />
      <StatusCell $w={401} $line />
      <StatusCell $pl={17}>
        <Label $size={10.5} $ls={-0.35} $w={32} $color="#222">100%</Label>
        <Glyph w={125} h={18} ml={-1}>
          <circle cx="7.500" cy="9" r="6.500" fill="#f8f8f8" stroke="#808080" />
          <path d="M4.500 9h6" stroke="#333" strokeWidth="1.500" />
          <rect x="22.500" y="7.500" width="74" height="2.500" fill="#f6f6f6" stroke="#d0d0d0" />
          <path d="M56.500 1h9v11L61 15.500 56.500 12z" fill="#0a74d6" />
          <circle cx="114.500" cy="9" r="6.500" fill="#f8f8f8" stroke="#808080" />
          <path d="M111.500 9h6M114.500 6v6" stroke="#333" strokeWidth="1.400" />
        </Glyph>
      </StatusCell>
    </StatusBar>
    <BottomEdge />
    <Watermark width="224" height="60" viewBox="985 590 224 60">
      <text x="991" y="624" fontFamily={UI} fontSize="15.500" fill="#b4b4b4" textLength="137">Activate Windows</text>
      <text x="991" y="643" fontFamily={UI} fontSize="11.500" fill="#b9bbbf" textLength="207">Go to Settings to activate Windows.</text>
      <text
        x="1021"
        y="639.500"
        fontFamily="Inter, sans-serif"
        fontWeight="600"
        fontSize="76"
        textLength="180"
        lengthAdjust="spacingAndGlyphs"
        fill="#fff"
        fillOpacity=".6"
        stroke="#d2d2d2"
        strokeWidth="1.500"
      >
        zoom
      </text>
    </Watermark>
  </PaintWindow>
);

const G = "#6f6f6f";

const Player = () => (
  <>
    <SeekRow>
      <Label $size={11.5} $ls={-0.2} $w={46}>29:22</Label>
      <SeekTrack>
        <SeekFill />
      </SeekTrack>
      <Label $size={11.5} $ls={-0.2} $ml={15}>1:17:43</Label>
    </SeekRow>
    <ControlRow>
      <PlayerButton $size={30}>
        <Glyph w={16} h={18}>
          <path d="M0 0h6v18H0zM9.500 0h6v18h-6z" fill={G} />
        </Glyph>
      </PlayerButton>
      <PlayerButton $ml={14}>
        <Glyph w={16} h={10}>
          <path d="M0 0h2.500v10H0zM9 0v10L3 5zM15.500 0v10l-6-5z" fill={G} />
        </Glyph>
      </PlayerButton>
      <PlayerButton $ml={2}>
        <Glyph w={10} h={10}>
          <path d="M0 0h10v10H0z" fill={G} />
        </Glyph>
      </PlayerButton>
      <PlayerButton $ml={2}>
        <Glyph w={16} h={10}>
          <path d="M13 0h2.500v10H13zM6.500 0v10l6-5zM0 0v10l6-5z" fill={G} />
        </Glyph>
      </PlayerButton>
      <PlayerButton $ml={14}>
        <Glyph w={17} h={14}>
          <path d="M1 5V1.200h5M11 1.200h5V5M16 9v3.800h-5M6 12.800H1V9" stroke={G} strokeWidth="2.200" />
        </Glyph>
      </PlayerButton>
      <PlayerButton $ml={2}>
        <Glyph w={17} h={14}>
          <path d="M3 2v12M8.500 0v12M14 0v14" stroke={G} strokeWidth="2.200" />
          <path d="M0 3.500L3 0l3 3.500zM5.500 10.500l3 3.500 3-3.500zM11.500 5h5v3h-5z" fill={G} />
        </Glyph>
      </PlayerButton>
      <PlayerButton $ml={14}>
        <Glyph w={15} h={14}>
          <path d="M0 1.500h14M0 5.500h14M0 9.500h9M0 13h9" stroke={G} strokeWidth="1.900" />
          <path d="M10.500 8.500l4 2.800-4 2.700z" fill={G} />
        </Glyph>
      </PlayerButton>
      <PlayerButton $ml={2}>
        <Glyph w={15} h={15}>
          <path d="M1.500 6V3.500q0-1 1-1H11M13.500 9v2.500q0 1-1 1H4" stroke={G} strokeWidth="2" />
          <path d="M10.500 0l3.500 2.500L10.500 5zM4.500 10L1 12.500 4.500 15z" fill={G} />
        </Glyph>
      </PlayerButton>
      <PlayerButton $ml={2}>
        <Glyph w={14} h={14}>
          <path d="M1.500 12.500l10-10M1 1.500l4 4M8 8.500l4 4" stroke={G} strokeWidth="2.200" />
          <path d="M8 .5h5.500V6zM13.500 8v5.500H8z" fill={G} />
        </Glyph>
      </PlayerButton>
      <Volume>
        <Glyph w={15} h={24}>
          <path d="M0 14h3l4-4v12.500L3 19H0z" fill="#7b7b7b" />
          <path d="M8.500 13.500q1.500 2.500 0 5.500M10.500 11.500q3 4.500 0 9.500" stroke="#ee9a30" strokeWidth="1.400" />
          <path d="M12.500 10q3.500 6 0 12" stroke="#f3b566" strokeWidth="1.200" />
        </Glyph>
        <VolumeMeter>
          <Glyph w={75} h={24}>
            <defs>
              <linearGradient id="vol">
                <stop offset="0" stopColor="#9cc79c" />
                <stop offset=".3" stopColor="#5cc45c" />
                <stop offset=".75" stopColor="#12ce14" />
                <stop offset=".84" stopColor="#f2b81c" />
                <stop offset=".92" stopColor="#f7801a" />
                <stop offset="1" stopColor="#ee3a1c" />
              </linearGradient>
            </defs>
            <path d="M2.500 20L70 2q2.500-.8 2.500 1.500v17q0 1.500-1.500 1.500H3q-2-.5-.5-2z" fill="url(#vol)" stroke="#777" strokeWidth="1.500" />
          </Glyph>
          <VolumeText>125%</VolumeText>
        </VolumeMeter>
      </Volume>
    </ControlRow>
  </>
);

const Desktop = () => (
  <Taskbar>
    <StartButton>
      <Glyph w={16} h={16}>
        <path d="M0 2.300l6.500-.9v6.100H0zM7.300 1.300L16 0v7.500H7.300zM0 8.300h6.500v6.200L0 13.600zM7.300 8.300H16V16l-8.700-1.300z" fill="#000" />
      </Glyph>
    </StartButton>
    <SearchBox>
      <Glyph w={17} h={17}>
        <circle cx="10.500" cy="6" r="5.200" stroke="#111" strokeWidth="1.200" />
        <path d="M6.500 9.800L.8 16" stroke="#111" strokeWidth="1.200" />
      </Glyph>
      <Label $size={14.5} $ls={-0.2} $ml={11} $color="#2a2a2a">Type here to search</Label>
    </SearchBox>
    <TaskItem $w={48}>
      <Glyph w={16} h={16}>
        <circle cx="8" cy="8" r="6.700" stroke="#000" strokeWidth="2" />
      </Glyph>
    </TaskItem>
    <TaskItem $w={50}>
      <Glyph w={17} h={16} ml={-2}>
        <path d="M1.500 0v3.500h10V0M1.500 16v-3.500h10V16M1.500 5.500h10v5h-10zM15.500 0v3.500M15.500 9v7" stroke="#000" />
        <path d="M14 4.500h3v3h-3z" fill="#000" />
      </Glyph>
    </TaskItem>
    <TaskItem>
      <Glyph w={22} h={24}>
        <circle cx="11" cy="12.500" r="10.800" fill="#8a8a8a" />
        <circle cx="11" cy="11.500" r="10.800" fill="#fff" />
        <circle cx="11" cy="11.500" r="9" stroke="#d2531c" strokeWidth="1.400" />
        <circle cx="11" cy="11.500" r="5.600" fill="#dd3f08" />
      </Glyph>
    </TaskItem>
    <TaskItem $bar="split">
      <Glyph w={27} h={26} ml={1}>
        <circle cx="12" cy="12" r="11" fill="#f2c32e" />
        <path d="M12 12L2.500 6.500A11 11 0 0 1 21.500 6.500H12z" fill="#dc4437" />
        <path d="M2.500 6.500A11 11 0 0 0 12 23l4.700-8.500L7.300 14.700z" fill="#2d9a52" />
        <circle cx="12" cy="12" r="5.200" fill="#f5f8fb" />
        <circle cx="12" cy="12" r="4.200" fill="#2f7de0" />
        <circle cx="18.500" cy="18.500" r="7.500" fill="#7a52b8" />
        <text x="18.500" y="21.700" textAnchor="middle" fontFamily={UI} fontSize="9" fill="#f2e9fb">R</text>
      </Glyph>
    </TaskItem>
    <TaskItem $bar="split">
      <Glyph w={22} h={20}>
        <path d="M0 1.500h8l2 2H0z" fill="#d79a1a" />
        <path d="M0 4h8l2-2h11v16H0z" fill="#fbcf52" />
        <path d="M4 19v-7.500q0-1 1-1h12q1 0 1 1V19h-4v-4H8v4z" fill="#3a8fd6" />
      </Glyph>
    </TaskItem>
    <TaskItem>
      <Glyph w={24} h={24}>
        <ellipse cx="12" cy="8.500" rx="11.500" ry="6" transform="rotate(-24 12 8.500)" fill="#f7dcdf" stroke="#dd5a62" />
        <path d="M8 9l10 4M14 3l-1.500 12" stroke="#6b7680" strokeWidth="1.500" />
        <path d="M2 14q5 4 12-1" stroke="#e58a8f" />
        <circle cx="15" cy="19" r="2.500" stroke="#1f83c0" strokeWidth="1.600" />
        <circle cx="20.500" cy="15.500" r="2.500" stroke="#1f83c0" strokeWidth="1.600" />
      </Glyph>
    </TaskItem>
    <TaskItem>
      <Glyph w={23} h={24}>
        <defs>
          <linearGradient id="store" x2="1" y2="1">
            <stop offset="0" stopColor="#0e5f9e" />
            <stop offset="1" stopColor="#25375e" />
          </linearGradient>
        </defs>
        <path d="M6 6V3q0-1.500 1.500-1.500h8Q17 1.500 17 3v3" stroke="#3db8ee" strokeWidth="2" />
        <path d="M0 5h23v16q0 2-2 2H2q-2 0-2-2z" fill="url(#store)" />
        <path d="M7 9.500h4.200v4.200H7z" fill="#f05a28" />
        <path d="M12.300 9.500h4.200v4.200h-4.200z" fill="#86c51e" />
        <path d="M7 14.800h4.200V19H7z" fill="#26a6ee" />
        <path d="M12.300 14.800h4.200V19h-4.200z" fill="#fdbf14" />
      </Glyph>
    </TaskItem>
    <TaskItem>
      <Glyph w={22} h={22}>
        <rect width="22" height="22" rx="7" fill="#478ff8" />
        <rect x="4" y="7" width="9.500" height="8" rx="2" fill="#fff" />
        <path d="M14.300 9.500L18 7.200v7.600l-3.700-2.300z" fill="#fff" />
      </Glyph>
    </TaskItem>
    <TaskItem $bar="split">
      <Glyph w={22} h={22}>
        <path d="M0 0h22v11L11 22H0z" fill="#3b3b3b" />
        <path d="M11 22V11h11z" fill="#ffda16" />
        <path d="M22 11v11H11z" fill="#2c2c2c" />
      </Glyph>
    </TaskItem>
    <TaskItem $bar="full">
      <Glyph w={23} h={24}>
        <defs>
          <linearGradient id="npp" x2="0" y2="1">
            <stop offset=".3" stopColor="#fff" />
            <stop offset="1" stopColor="#6dc31c" />
          </linearGradient>
        </defs>
        <path d="M.5 2h14l4 3v17.500H.5z" fill="url(#npp)" stroke="#8a8f8a" />
        <path d="M2 2h13" stroke="#555" strokeDasharray="1.500 1.500" />
        <path d="M4.500 8v7M7 8v7M4.500 8H7M9 11.500h2M12.500 11.500h1.500" stroke="#333" />
        <path d="M13 18L20 1.500 22.500 3 15.500 18.500l-2.500 2z" fill="#f0a62a" />
        <path d="M20 1.500l.8-1.300L23 1.500 22.500 3z" fill="#c93a2a" />
      </Glyph>
    </TaskItem>
    <TaskItem $bar="full">
      <Glyph w={22} h={22}>
        <defs>
          <linearGradient id="sky" x2="1" y2="1">
            <stop offset="0" stopColor="#2180e0" />
            <stop offset="1" stopColor="#8c6be0" />
          </linearGradient>
        </defs>
        <rect width="22" height="22" fill="url(#sky)" />
        <path d="M0 11.500L6 6l14 16H0z" fill="#1b3f73" />
        <path d="M12 15l3-2.500 7 7.500v2h-4z" fill="#234a85" />
        <circle cx="15" cy="5" r="2.200" fill="#fff" />
      </Glyph>
    </TaskItem>
    <TaskItem $bar="full" $on $w={48}>
      <Cone size={23} />
    </TaskItem>
    <Tray>
      <Glyph w={12} h={7}>
        <path d="M.6 6.400L6 1l5.400 5.400" stroke="#111" strokeWidth="1.300" />
      </Glyph>
      <Glyph w={16} h={16} ml={9}>
        <rect width="16" height="16" fill="#1c64b8" />
        <path d="M8 3v10M3 8h10" stroke="#fff" strokeWidth="1.700" />
      </Glyph>
      <Glyph w={13} h={13} ml={11}>
        <path d="M1 12Q1 1 12.500 1" stroke="#555" />
        <path d="M3.800 12.500Q4 4 12.500 3.800M6.500 12.500Q7 7 12.500 6.600" stroke="#333" strokeWidth="1.100" />
        <path d="M9.200 12.500q.3-3 3.300-3.200" stroke="#111" strokeWidth="1.300" />
        <circle cx="11.800" cy="11.800" r="1.200" fill="#000" />
      </Glyph>
      <TrayText $w={42}>
        ENG
        <br />
        IN
      </TrayText>
      <TrayText $w={66}>
        17:18
        <br />
        03-06-2022
      </TrayText>
      <Glyph w={25} h={26} ml={13}>
        <path d="M0 2h16v12H6l-3 3v-3H0z" fill="#000" />
        <path d="M3 5.500h10M3 8h10M3 10.500h7" stroke="#dfe9ee" />
        <circle cx="16" cy="17" r="7.600" fill="#dadddf" stroke="#6a7074" />
        <text x="16" y="21" textAnchor="middle" fontFamily={UI} fontSize="11" fill="#111">2</text>
      </Glyph>
      <Glyph w={8} h={8}>
        <g />
      </Glyph>
      <ShowDesktop />
    </Tray>
  </Taskbar>
);

export default function App() {
  return (
    <Screen>
      <Global />
      <TitleBar>
        <Cone size={15} />
        <Label $size={12} $ls={-0.3} $ml={5}>
          {"Y2Mate.is - Java Packages Session-5  By Mr. Hari Krishna-Ynwvzh8NkzU-720p-1649758648560.mp4 - VLC media player"}
        </Label>
        <Spacer />
        <Glyph w={121} h={14}>
          <WindowButtons dark="#000" />
        </Glyph>
      </TitleBar>
      <MenuBar>
        {menus.map(([a, b, c, w]) => (
          <MenuItem key={a + b + c} $w={w}>
            {a}
            <u>{b}</u>
            {c}
          </MenuItem>
        ))}
      </MenuBar>
      <Video>
        <Paint />
      </Video>
      <Player />
      <Desktop />
    </Screen>
  );
}
